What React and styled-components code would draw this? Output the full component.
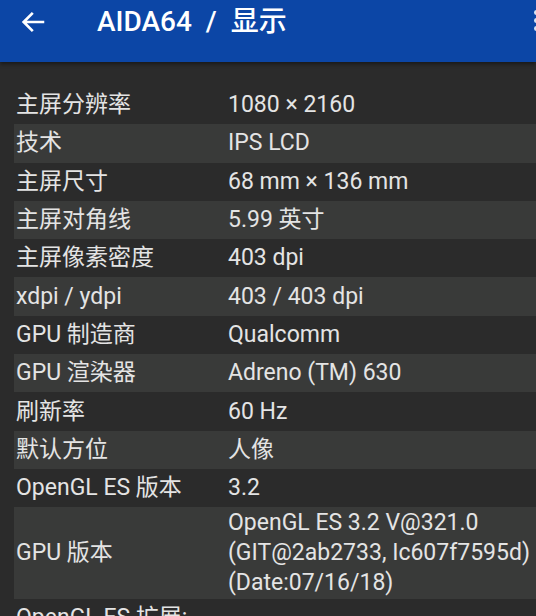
import styled, { createGlobalStyle } from "styled-components";

const COLORS = {
  header: "#0c46a6",
  page: "#2b2b2b",
  stripe: "#393a39",
  text: "#e4e4e4",
  white: "#ffffff",
};

const FONT = `Roboto, "Noto Sans CJK SC", "Noto Sans", sans-serif`;

const GlobalStyle = createGlobalStyle`
  html, body {
    margin: 0;
    padding: 0;
    background: ${COLORS.page};
    font-family: ${FONT};
  }
  body {
    width: 536px;
    height: 616px;
    overflow: hidden;
  }
`;

const Screen = styled.div`
  width: 536px;
  height: 616px;
  overflow: hidden;
  background: ${COLORS.page};
`;

// toolbar is cropped in the shot: icons and title sit in its upper part
const AppBar = styled.header`
  height: 62px;
  box-sizing: border-box;
  background: ${COLORS.header};
  display: flex;
  align-items: flex-start;
  padding: 6px 0 0 18px;
  box-shadow: 0 2px 4px rgba(0, 0, 0, 0.45);
  overflow: hidden;
  position: relative;
  z-index: 1;
`;

const BackButton = styled.div`
  width: 30px;
  height: 32px;
  display: flex;
  align-items: center;
  justify-content: center;
`;

const Title = styled.h1`
  margin: 0 0 0 49px;
  height: 32px;
  line-height: 32px;
  font-family: ${FONT};
  font-size: 28px;
  font-weight: 500;
  color: ${COLORS.white};
  white-space: pre;
`;

const Kebab = styled.div`
  margin-left: auto;
  margin-right: -3px;
  margin-top: 4px;
  display: flex;
  flex-direction: column;
  gap: 3px;
`;

const Dot = styled.span`
  width: 5px;
  height: 5px;
  border-radius: 50%;
  background: rgba(255, 255, 255, 0.85);
`;

const List = styled.div`
  padding: 24px 0 0 14px;
`;

const Row = styled.div`
  display: grid;
  grid-template-columns: 212px 1fr;
  align-items: center;
  min-height: 38.3px;
  padding: ${(p) => (p.multi ? "1px 0 1px 2px" : "0 0 0 2px")};
  background: ${(p) => (p.striped ? COLORS.stripe : "transparent")};
  color: ${COLORS.text};
  font-size: 23px;
  line-height: 30px;
  box-sizing: border-box;
`;

const Label = styled.div`
  white-space: nowrap;
`;

const Value = styled.div`
  white-space: pre;
  line-height: 30px;
`;

const ROWS = [
  ["主屏分辨率", "1080 × 2160"],
  ["技术", "IPS LCD"],
  ["主屏尺寸", "68 mm × 136 mm"],
  ["主屏对角线", "5.99 英寸"],
  ["主屏像素密度", "403 dpi"],
  ["xdpi / ydpi", "403 / 403 dpi"],
  ["GPU 制造商", "Qualcomm"],
  ["GPU 渲染器", "Adreno (TM) 630"],
  ["刷新率", "60 Hz"],
  ["默认方位", "人像"],
  ["OpenGL ES 版本", "3.2"],
  [
    "GPU 版本",
    "OpenGL ES 3.2 V@321.0\n(GIT@2ab2733, Ic607f7595d)\n(Date:07/16/18)",
  ],
  ["OpenGL ES 扩展:", ""],
];

export default function App() {
  return (
    <Screen>
      <GlobalStyle />
      <AppBar>
        <BackButton>
          <svg width="28" height="28" viewBox="0 0 24 24" fill="none">
            <path
              d="M20.5 12H4.5M11 5l-7 7 7 7"
              stroke="#fff"
              strokeWidth="2.3"
              strokeLinecap="square"
            />
          </svg>
        </BackButton>
        <Title>{"AIDA64  /  显示"}</Title>
        <Kebab>
          <Dot />
          <Dot />
          <Dot />
        </Kebab>
      </AppBar>
      <List>
        {ROWS.map(([label, value], i) => {
          const multi = value.includes("\n");
          return (
            <Row key={label} striped={i % 2 === 1} multi={multi}>
              <Label>{label}</Label>
              <Value>{value}</Value>
            </Row>
          );
        })}
      </List>
    </Screen>
  );
}
